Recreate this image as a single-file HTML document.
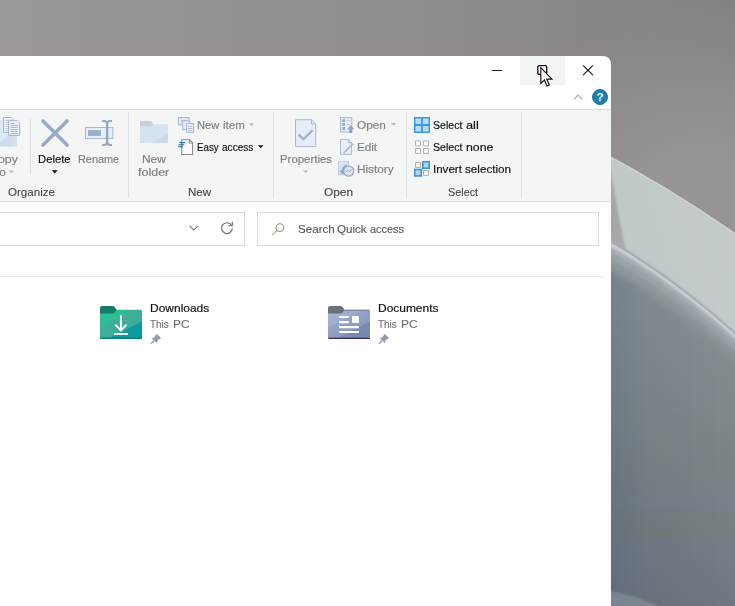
<!DOCTYPE html>
<html>
<head>
<meta charset="utf-8">
<style>
html,body{margin:0;padding:0;overflow:hidden;}
body{width:735px;height:606px;overflow:hidden;position:relative;font-family:"Liberation Sans",sans-serif;font-size:12px;color:#1b1b1b;background:#8d898b;}
#bg{position:absolute;left:0;top:0;width:735px;height:606px;}
#win{position:absolute;left:-20px;top:56px;width:631px;height:550px;background:#fff;border-top-right-radius:8px;overflow:hidden;}
#w{position:absolute;left:20px;top:-56px;width:735px;height:606px;}
#ribbon{position:absolute;left:-20px;top:109px;width:631px;height:93px;background:#f4f6f6;border-top:1px solid #dadbdc;border-bottom:1px solid #dadbdc;box-sizing:border-box;}
.t{position:absolute;white-space:nowrap;line-height:14px;font-size:11px;transform-origin:0 0;}
.dim{color:#848084;-webkit-text-stroke:0.2px #848084;}
.lbl{color:#47424b;-webkit-text-stroke:0.1px #47424b;}
.blk{color:#15101a;-webkit-text-stroke:0.17px #15101a;}
.srch{color:#5c585e;-webkit-text-stroke:0.15px #5c585e;}
.sub{color:#76717a;-webkit-text-stroke:0.15px #76717a;}
.vsep{position:absolute;width:1px;background:#e0e2e3;}
.box{position:absolute;border:1px solid #d9d9d9;box-sizing:border-box;background:#fff;}
svg.i{position:absolute;overflow:visible;left:0;top:0;}
</style>
</head>
<body>
<svg id="bg" viewBox="0 0 735 606">
  <defs>
    <linearGradient id="g1" x1="0" y1="0" x2="1" y2="0">
      <stop offset="0" stop-color="#9c9899"/>
      <stop offset="0.5" stop-color="#928e90"/>
      <stop offset="1" stop-color="#858183"/>
    </linearGradient>
    <radialGradient id="g1b" gradientUnits="userSpaceOnUse" cx="725" cy="225" r="235">
      <stop offset="0" stop-color="#fff" stop-opacity="0.15"/>
      <stop offset="0.35" stop-color="#fff" stop-opacity="0.14"/>
      <stop offset="0.75" stop-color="#fff" stop-opacity="0.04"/>
      <stop offset="1" stop-color="#fff" stop-opacity="0"/>
    </radialGradient>
    <linearGradient id="g2" x1="0" y1="1" x2="1" y2="0">
      <stop offset="0" stop-color="#bcc4c5"/>
      <stop offset="1" stop-color="#c6cccc"/>
    </linearGradient>
    <linearGradient id="g3" gradientUnits="userSpaceOnUse" x1="611" y1="0" x2="735" y2="0">
      <stop offset="0" stop-color="#74828a"/>
      <stop offset="0.3" stop-color="#7e8a8e"/>
      <stop offset="1" stop-color="#869194"/>
    </linearGradient>
    <linearGradient id="g4" gradientUnits="userSpaceOnUse" x1="0" y1="300" x2="0" y2="606">
      <stop offset="0" stop-color="#0a1a24" stop-opacity="0"/>
      <stop offset="0.35" stop-color="#0a1a24" stop-opacity="0.05"/>
      <stop offset="1" stop-color="#0a1a24" stop-opacity="0.17"/>
    </linearGradient>
    <filter id="bl" x="-10%" y="-10%" width="120%" height="120%"><feGaussianBlur stdDeviation="0.9"/></filter>
    <filter id="bl2" x="-30%" y="-30%" width="160%" height="160%"><feGaussianBlur stdDeviation="3"/></filter>
  </defs>
  <rect width="735" height="606" fill="url(#g1)"/>
  <rect x="450" y="0" width="285" height="300" fill="url(#g1b)"/>
  <path d="M600 150.7 Q675 190.2 750 243.5 L750 606 L600 606 Z" fill="url(#g2)"/>
  <path d="M600 151.4 Q675 190.9 750 244.2" fill="none" stroke="#cdd3d3" stroke-width="1.4"/>
  <path d="M600 150 L608.4 160 L614 190 L623.4 240 L626 250 L600 247 Z" fill="#a7a6a9" filter="url(#bl)"/>
  <g filter="url(#bl)">
    <path d="M600 234 Q675 275.0 750 345.6 L750 620 L600 620 Z" fill="#a9b0b2"/>
    <path d="M600 236.4 Q675 277.4 750 348.0 L750 620 L600 620 Z" fill="#c2c9cb"/>
    <path d="M600 240.8 Q675 281.8 750 352.4 L750 620 L600 620 Z" fill="#a6acb3"/>
    <path d="M600 246 Q675 287.0 750 357.6 L750 620 L600 620 Z" fill="#9aa2a6"/>
    <path d="M600 253 Q675 293.8 750 364.8 L750 620 L600 620 Z" fill="#8f999c"/>
  </g>
  <path d="M600 235.4 Q675 276.4 750 347" stroke="#a3a9ac" stroke-width="1.3" fill="none" opacity="0.8"/>
  <path d="M600 238.3 Q675 279.3 750 349.9" stroke="#c6cccf" stroke-width="2.2" fill="none"/>
  <path d="M596 262 Q675 302.8 754 373.8 L754 620 L596 620 Z" fill="url(#g3)" filter="url(#bl2)"/>
  <path d="M596 266 Q675 306.8 754 377.8 L754 620 L596 620 Z" fill="url(#g4)" filter="url(#bl2)"/>
  <path d="M600 589 Q640 595 668 612 L600 612 Z" fill="#8e9aa0" opacity="0.55" filter="url(#bl)"/>
</svg>
<div id="win"><div id="w">
  <!-- title bar -->
  <div style="position:absolute;left:520px;top:56px;width:45px;height:29px;background:#f3f4f4;"></div>
  <svg class="i" width="735" height="606" viewBox="0 0 735 606">
    <path d="M492 70.5H502" stroke="#1a1a1a" stroke-width="1.1" fill="none"/>
    <rect x="537.8" y="65.6" width="8.9" height="8.9" rx="1.6" fill="#fff" stroke="#fff" stroke-width="3"/><rect x="537.8" y="65.6" width="8.9" height="8.9" rx="1.4" fill="#fff" stroke="#0c0c0c" stroke-width="1.35"/>
    <path d="M583.1 65.3L592.9 75.1M592.9 65.3L583.1 75.1" stroke="#2a1430" stroke-width="1.2" fill="none"/>
    <!-- cursor -->
    <path d="M540.8 67.6V83.4L544.4 80L546.9 86L549.3 85L546.8 79.1H551.9Z" fill="#fff" stroke="#1c0a24" stroke-width="1.15"/>
    <!-- chevron -->
    <path d="M574 99.4L578.1 95.2L582.2 99.4" stroke="#a8a8a8" stroke-width="1.2" fill="none"/>
    <circle cx="600" cy="97" r="7.5" fill="#1c80aa" stroke="#17709a" stroke-width="1"/>
    <text x="600" y="101.3" font-family="Liberation Sans" font-weight="bold" font-size="11.5" fill="#fff" text-anchor="middle">?</text>
  </svg>

  <div id="ribbon"></div>
  <div class="vsep" style="left:30px;top:119px;height:55px;background:#dcdddd;"></div>
  <div class="vsep" style="left:128px;top:112px;height:86px;"></div>
  <div class="vsep" style="left:273px;top:112px;height:86px;"></div>
  <div class="vsep" style="left:406px;top:112px;height:86px;"></div>
  <div class="vsep" style="left:521px;top:112px;height:86px;"></div>
  <svg class="i" width="735" height="606" viewBox="0 0 735 606">
    <!-- copy to icon -->
    <path d="M-5 119.5H16.7V146.6H-5Z" fill="#dbe8f7"/>
    <path d="M-5 146.6L12 133V146.6Z" fill="#d0dcec"/>
    <path d="M12 133H16.7V146.6H12Z" fill="#d3dfee"/>
    <path d="M3.6 117.5H11L13 119.5V132.4H3.6Z" fill="#eef2fa" stroke="#a4b4d0" stroke-width="1"/>
    <path d="M5.5 120.5H9.5M5.5 122.5H9.5M5.5 124.5H9.5M5.5 126.5H9.5M5.5 128.5H9.5M5.5 130.5H9.5" stroke="#c3cde0" stroke-width="1"/>
    <path d="M8.6 120.6H17.2L19.6 123V135.4H8.6Z" fill="#eef2fa" stroke="#a4b4d0" stroke-width="1"/>
    <path d="M10.5 123.5H15M10.5 125.5H17.8M10.5 127.5H17.8M10.5 129.5H17.8M10.5 131.5H17.8M10.5 133.5H17.8" stroke="#a9b8d3" stroke-width="1"/>
    <!-- arrows -->
    <path d="M8.8 170.4H13.8L11.3 173.2Z" fill="#b8b8b8"/>
    <path d="M51.8 170.2H57.6L54.7 173.4Z" fill="#111"/>
    <path d="M248.9 123.2H253.9L251.4 126Z" fill="#b8b8b8"/>
    <path d="M258 145.2H263.4L260.7 148.2Z" fill="#111"/>
    <path d="M302.9 170.2H308.1L305.5 173Z" fill="#b8b8b8"/>
    <path d="M391 122.9H396L393.5 125.8Z" fill="#b8b8b8"/>
    <!-- delete X -->
    <path d="M43 120.9L67.1 145M67.1 120.9L43 145" stroke="#99aac9" stroke-width="3.6" stroke-linecap="round" fill="none"/>
    <!-- rename -->
    <rect x="85.5" y="127.5" width="27.3" height="11" fill="#e8eefa" stroke="#a7b8d6" stroke-width="1"/>
    <rect x="88" y="130.1" width="13" height="5.8" fill="#9badc9"/>
    <path d="M107.1 121V145" stroke="#93a6c6" stroke-width="2.3" fill="none"/>
    <path d="M102.2 121H104.2Q107.1 121 107.1 125Q107.1 121 110 121H112" stroke="#93a6c6" stroke-width="2" fill="none"/>
    <path d="M102.2 145H104.2Q107.1 145 107.1 141Q107.1 145 110 145H112" stroke="#93a6c6" stroke-width="2" fill="none"/>
    <!-- new folder -->
    <path d="M140 121H151L153 124.2H167.9V143H140Z" fill="#d5e2f2"/>
    <path d="M140 121H151L153 124.2L151.5 126.2H140Z" fill="#c5cfe0"/>
    <path d="M167.9 133L153 143H167.9Z" fill="#cfd9e8"/>
    <!-- new item -->
    <rect x="178.4" y="117.5" width="10.6" height="7.2" fill="#dfe7f3" stroke="#a7b8d3"/>
    <path d="M181 120.5H186.5" stroke="#b9c5da" stroke-width="1"/>
    <rect x="182.6" y="121" width="7.2" height="8.6" fill="#e6edf8" stroke="#a7b8d3"/>
    <rect x="186.6" y="123.6" width="7" height="8.8" fill="#eef2fa" stroke="#a7b8d3"/>
    <path d="M188 126.5H192.5M188 128.5H192.5M188 130.5H192.5" stroke="#b3c0d8" stroke-width="1"/>
    <!-- easy access -->
    <path d="M181.7 139.8H189.6L192.6 142.8V154.4H181.7Z" fill="#f9f9f9" stroke="#8c8689" stroke-width="1.05"/>
    <path d="M189.4 139.8V143H192.6" fill="none" stroke="#8c8689" stroke-width="0.9"/>
    <path d="M179.6 142.6H185.2M178.6 144.7H184.2M178 146.8H183" stroke="#1a6a96" stroke-width="1.1"/>
    <!-- properties -->
    <path d="M295.5 119.7H311.5L315.7 124V146.5H295.5Z" fill="#e6edf9" stroke="#a9b9d6" stroke-width="1"/>
    <path d="M311.5 119.7V124H315.7" fill="none" stroke="#a9b9d6" stroke-width="1"/>
    <path d="M298.6 134.6L303.5 139.2L312.5 130.2" fill="none" stroke="#a0b1ce" stroke-width="2.3"/>
    <!-- open -->
    <rect x="340.6" y="117.6" width="11.2" height="14.4" fill="#e6edf9" stroke="#a9b9d6"/>
    <path d="M342.2 119.2H345.1V121.9H342.2ZM342.2 123.1H345.1V125.8H342.2ZM342.2 127.1H345.1V129.9H342.2Z" fill="#9badc9"/>
    <path d="M346.5 120.5H350M346.5 124.5H350" stroke="#c5d0e2" stroke-width="1"/>
    <path d="M350.7 125.2L354.3 129.2H352.2V132.9H349.2V129.2H347.1Z" fill="#8fa2c4"/>
    <!-- edit -->
    <path d="M340.6 139.6H348.6L351.6 142.6V154.4H340.6Z" fill="#e8eefa" stroke="#a9b9d6"/>
    <path d="M348.6 139.6V142.6H351.6" fill="none" stroke="#a9b9d6"/>
    <path d="M343.6 153L353.2 143.6" stroke="#b4bccb" stroke-width="1.8"/>
    <!-- history -->
    <rect x="338.6" y="161.6" width="10" height="13.2" fill="#dae6f5" stroke="#bfcbe0"/>
    <path d="M342.4 171.6A6.5 6.5 0 0 1 346.6 165.3" stroke="#8fa2c4" stroke-width="1.7" fill="none"/>
    <path d="M339.4 170.4H345.6L342.5 174.8Z" fill="#8fa2c4"/>
    <circle cx="348.7" cy="171.1" r="5.1" fill="#dfe5ef" stroke="#9ba7bb" stroke-width="1.2"/>
    <path d="M346.3 171.9L348.2 170.3L349.5 171.7L351.2 169.5" stroke="#8a96aa" stroke-width="0.9" fill="none"/>
    <path d="M348.7 167.2V168M348.7 174.2V175M344.8 171.1H345.6M351.8 171.1H352.6" stroke="#a5afc0" stroke-width="0.8"/>
    <!-- select all -->
    <rect x="414" y="117" width="16" height="16" fill="#3e98e0"/>
    <path d="M415.5 118.5H421.1V124.1H415.5ZM422.9 118.5H428.5V124.1H422.9ZM415.5 125.9H421.1V131.5H415.5ZM422.9 125.9H428.5V131.5H422.9Z" fill="#b5dafa"/>
    <!-- select none -->
    <path d="M415.5 140.9H420.5V145.9H415.5ZM423.5 140.9H428.5V145.9H423.5ZM415.5 148.5H420.5V153.5H415.5ZM423.5 148.5H428.5V153.5H423.5Z" fill="#fbfbfb" stroke="#b2b2b2"/>
    <!-- invert -->
    <path d="M415.5 162.5H420.5V167.5H415.5ZM423.5 170.5H428.5V175.5H423.5Z" fill="#fbfbfb" stroke="#b2b2b2"/>
    <rect x="422" y="161" width="8" height="8" fill="#3a96dd"/><rect x="423.6" y="162.6" width="4.8" height="4.8" fill="#b5d9f7"/>
    <rect x="414" y="168.7" width="8" height="8" fill="#3a96dd"/><rect x="415.6" y="170.3" width="4.8" height="4.8" fill="#b5d9f7"/>
  </svg>

  <!-- address + search -->
  <div class="box" style="left:-20px;top:212px;width:265px;height:34px;"></div>
  <div class="box" style="left:257px;top:212px;width:342px;height:34px;"></div>
  <svg class="i" width="735" height="606" viewBox="0 0 735 606">
    <path d="M189.7 225.9L193.8 230L197.9 225.9" stroke="#6a6a6a" stroke-width="1.05" fill="none"/>
    <path d="M231.6 225.3A5.4 5.4 0 1 0 232.4 228.4" stroke="#6e6e6e" stroke-width="1.1" fill="none"/>
    <path d="M232.3 221.8V225.7H228.4" stroke="#6e6e6e" stroke-width="1.1" fill="none"/>
    <circle cx="279.9" cy="227.6" r="3.9" stroke="#8c8c8c" stroke-width="1.05" fill="none"/>
    <path d="M277.1 230.4L272.1 235.2" stroke="#b3a980" stroke-width="1.15"/>
  </svg>

  <div style="position:absolute;left:-20px;top:276px;width:624px;height:1px;background:#e6e6e6;"></div>
  <svg class="i" width="735" height="606" viewBox="0 0 735 606">
    <defs>
      <linearGradient id="dl" gradientUnits="userSpaceOnUse" x1="100" y1="306" x2="122.4" y2="349.3">
        <stop offset="0" stop-color="#2bc193"/><stop offset="0.39" stop-color="#32ba94"/>
        <stop offset="0.41" stop-color="#3fae98"/><stop offset="0.665" stop-color="#3dab99"/>
        <stop offset="0.685" stop-color="#0b9ba0"/><stop offset="1" stop-color="#0a989f"/>
      </linearGradient>
      <linearGradient id="dc" gradientUnits="userSpaceOnUse" x1="328" y1="306" x2="350.4" y2="349.3">
        <stop offset="0" stop-color="#a9b8d2"/><stop offset="0.39" stop-color="#9dadcd"/>
        <stop offset="0.41" stop-color="#94a4c7"/><stop offset="0.665" stop-color="#8c9ac1"/>
        <stop offset="0.685" stop-color="#7d8ab5"/><stop offset="1" stop-color="#6f8aad"/>
      </linearGradient>
    </defs>
    <!-- downloads folder -->
    <path d="M102.5 306H112.5Q113.6 306 114.4 307L116.4 309.8H140.5Q142 309.8 142 311.3V337.5Q142 339 140.5 339H101.5Q100 339 100 337.5V308.5Q100 306 102.5 306Z" fill="url(#dl)"/>
    <path d="M102.5 306H112.5Q113.6 306 114.4 307L116.4 309.8L114.6 312.6Q114 313.5 113 313.5H100V308.5Q100 306 102.5 306Z" fill="#137a6c"/>
    <path d="M100 337.5H142Q142 339 140.5 339H101.5Q100 339 100 337.5Z" fill="#0c8278"/>
    <path d="M120.9 315.2V330.3M115.3 324.7L120.9 330.3L126.5 324.7" stroke="#fff" stroke-width="1.9" fill="none"/>
    <path d="M114 334H128" stroke="#fff" stroke-width="1.9"/>
    <!-- documents folder -->
    <path d="M330.5 306H340.5Q341.6 306 342.4 307L344.4 309.8H368.5Q370 309.8 370 311.3V337.5Q370 339 368.5 339H329.5Q328 339 328 337.5V308.5Q328 306 330.5 306Z" fill="url(#dc)"/>
    <path d="M330.5 306H340.5Q341.6 306 342.4 307L344.4 309.8L342.6 312.6Q342 313.5 341 313.5H328V308.5Q328 306 330.5 306Z" fill="#67727b"/>
    <path d="M344 310.3H369.5" stroke="#6f7c90" stroke-width="1"/>
    <path d="M328 337.8H370Q370 339 368.5 339H329.5Q328 339 328 337.8Z" fill="#3a2a5e"/>
    <path d="M339 317H349M339 322.1H349M339 327.1H359M339 332H359" stroke="#fff" stroke-width="2.1"/>
    <rect x="352" y="316.1" width="7" height="6.9" rx="1" fill="#fff"/>
    <!-- pins -->
    <g fill="#949ca8" stroke="none">
      <path d="M156.8 333.9L161.1 337.9L159.7 339.1L158 340.1L156.7 342.9L151.6 338.2L154.4 337.3L155.5 335.4Z"/>
      <path d="M153.9 340.7L151 343.8" stroke="#949ca8" stroke-width="1.3" fill="none"/>
    </g>
    <g fill="#949ca8" stroke="none" transform="translate(228 0)"><path d="M156.8 333.9L161.1 337.9L159.7 339.1L158 340.1L156.7 342.9L151.6 338.2L154.4 337.3L155.5 335.4Z"/><path d="M153.9 340.7L151 343.8" stroke="#949ca8" stroke-width="1.3" fill="none"/></g>
  </svg>

  <div class="t dim" style="left:-11.3px;top:152px;transform:scaleX(1.124);">Copy</div>
  <div class="t dim" style="left:-4.3px;top:165px;transform:scaleX(1.089);">to</div>
  <div class="t blk" style="left:37.9px;top:152px;transform:scaleX(1.026);">Delete</div>
  <div class="t dim" style="left:77.7px;top:152px;transform:scaleX(0.988);">Rename</div>
  <div class="t lbl" style="left:7.9px;top:185px;transform:scaleX(1.052);">Organize</div>
  <div class="t dim" style="left:141.9px;top:152px;transform:scaleX(1.076);">New</div>
  <div class="t dim" style="left:138.2px;top:165px;transform:scaleX(1.137);">folder</div>
  <div class="t dim" style="left:197.1px;top:118px;transform:scaleX(1.014);">New</div>
  <div class="t dim" style="left:222.8px;top:118px;transform:scaleX(1.047);">item</div>
  <div class="t blk" style="left:196.5px;top:140px;transform:scaleX(0.887);">Easy</div>
  <div class="t blk" style="left:222.4px;top:140px;transform:scaleX(0.915);">access</div>
  <div class="t lbl" style="left:187.7px;top:185px;transform:scaleX(1.048);">New</div>
  <div class="t dim" style="left:279.5px;top:152px;transform:scaleX(1.037);">Properties</div>
  <div class="t dim" style="left:357.0px;top:118px;transform:scaleX(1.069);">Open</div>
  <div class="t dim" style="left:356.5px;top:140px;transform:scaleX(1.061);">Edit</div>
  <div class="t dim" style="left:356.5px;top:162px;transform:scaleX(1.070);">History</div>
  <div class="t lbl" style="left:324.1px;top:185px;transform:scaleX(1.077);">Open</div>
  <div class="t blk" style="left:433.3px;top:118px;transform:scaleX(0.967);">Select</div>
  <div class="t blk" style="left:466.2px;top:118px;transform:scaleX(1.160);">all</div>
  <div class="t blk" style="left:433.3px;top:140px;transform:scaleX(0.967);">Select</div>
  <div class="t blk" style="left:465.7px;top:140px;transform:scaleX(1.122);">none</div>
  <div class="t blk" style="left:433.3px;top:162px;transform:scaleX(1.048);">Invert</div>
  <div class="t blk" style="left:464.8px;top:162px;transform:scaleX(1.062);">selection</div>
  <div class="t lbl" style="left:447.6px;top:185px;transform:scaleX(0.983);">Select</div>
  <div class="t srch" style="left:297.5px;top:222px;transform:scaleX(1.055);">Search</div>
  <div class="t srch" style="left:337.0px;top:222px;transform:scaleX(1.050);">Quick</div>
  <div class="t srch" style="left:370.1px;top:222px;transform:scaleX(0.994);">access</div>
  <div class="t blk" style="left:150.3px;top:301px;transform:scaleX(1.089);">Downloads</div>
  <div class="t sub" style="left:150.4px;top:317px;transform:scaleX(0.900);">This</div>
  <div class="t sub" style="left:172.7px;top:317px;transform:scaleX(1.086);">PC</div>
  <div class="t blk" style="left:378.1px;top:301px;transform:scaleX(1.087);">Documents</div>
  <div class="t sub" style="left:378.3px;top:317px;transform:scaleX(0.900);">This</div>
  <div class="t sub" style="left:400.6px;top:317px;transform:scaleX(1.086);">PC</div>
</div></div>
</body>
</html>
